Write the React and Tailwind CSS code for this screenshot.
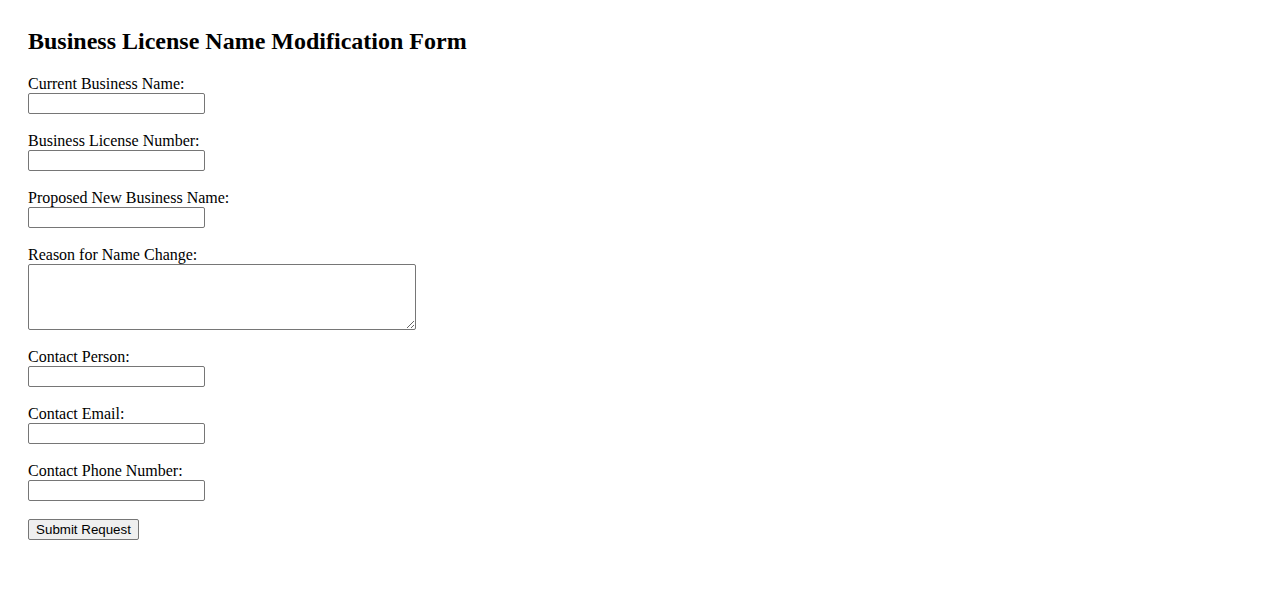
const fields = [
  { id: "currentName", label: "Current Business Name:" },
  { id: "licenseNumber", label: "Business License Number:" },
  { id: "newName", label: "Proposed New Business Name:" },
  { id: "reason", label: "Reason for Name Change:", area: true },
  { id: "contactPerson", label: "Contact Person:" },
  { id: "contactEmail", label: "Contact Email:" },
  { id: "contactPhone", label: "Contact Phone Number:" },
];

export default function App() {
  return (
    <div className="min-h-[601px] bg-white pt-[27px] pl-[28px] text-black font-['Liberation_Serif',serif]">
      <h2 className="text-[24px] font-bold leading-[28px] mb-[20px]">
        Business License Name Modification Form
      </h2>
      <form onSubmit={(e) => e.preventDefault()}>
        {fields.map((f) => (
          <div key={f.id} className="mb-[18px]">
            <label htmlFor={f.id} className="block text-[16px] leading-[18px]">
              {f.label}
            </label>
            {f.area ? (
              <textarea
                id={f.id}
                className="block w-[388px] h-[66px] border border-[#767676] rounded-[2px] bg-white resize-y font-['Liberation_Mono',monospace] text-[13px]"
              />
            ) : (
              <input
                id={f.id}
                type="text"
                className="block w-[177px] h-[21px] border border-[#767676] rounded-[2px] bg-white px-[2px] text-[13px] font-['Liberation_Sans',sans-serif]"
              />
            )}
          </div>
        ))}
        <button
          type="submit"
          className="block h-[21px] w-[111px] border border-[#767676] rounded-[2px] bg-[#efefef] text-[13.33px] leading-[15px] text-black font-['Liberation_Sans',sans-serif]"
        >
          Submit Request
        </button>
      </form>
    </div>
  );
}
